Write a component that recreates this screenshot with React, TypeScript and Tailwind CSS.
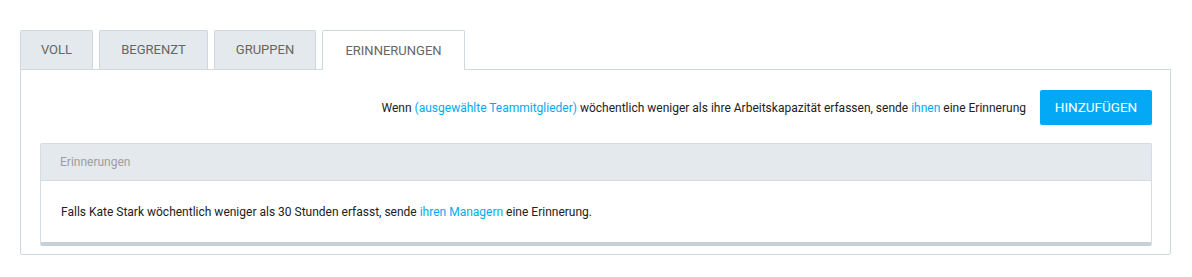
import React from "react";

export default function App() {
  const tabs = [
    { t: "VOLL", w: "w-[73px]" },
    { t: "BEGRENZT", w: "w-[109px]" },
    { t: "GRUPPEN", w: "w-[102px]" },
  ];
  return (
    <div className="w-[1192px] h-[277px] bg-white pt-[30px] pl-[20px] font-['Roboto',sans-serif]">
      <div className="flex items-end gap-[6px] h-[39px]">
        {tabs.map((x) => (
          <div
            key={x.t}
            className={`${x.w} h-[39px] flex items-center justify-center bg-[#e4e9ed] border border-b-0 border-[#cfd8dc] rounded-t-[2px] text-[13px] text-[#666]`}
          >
            {x.t}
          </div>
        ))}
        <div className="relative z-10 w-[143px] h-[40px] mb-[-1px] flex items-center justify-center bg-white border border-b-0 border-[#cfd8dc] rounded-t-[2px] text-[13px] text-[#666]">
          ERINNERUNGEN
        </div>
      </div>
      <div className="w-[1151px] border border-[#cfd8dc] rounded-b-[2px] pt-[20px] pb-[8px] pl-[19px] pr-[18px]">
        <div className="flex items-center justify-end gap-[14px]">
          <div className="text-[12px] text-[#212121]">
            Wenn <span className="text-[#03a9f4]">(ausgewählte Teammitglieder)</span> wöchentlich weniger als ihre Arbeitskapazität erfassen, sende <span className="text-[#03a9f4]">ihnen</span> eine Erinnerung
          </div>
          <button className="w-[112px] h-[35px] bg-[#03a9f4] rounded-[2px] text-white text-[13.5px]">
            HINZUFÜGEN
          </button>
        </div>
        <div className="mt-[18px] border border-[#d5dde2] border-b-[4px] border-b-[#c5d0d8] rounded-[2px]">
          <div className="h-[37px] bg-[#e4e9ed] border-b border-[#d5dde2] flex items-center pl-[19px] text-[12px] text-[#9e9e9e]">
            Erinnerungen
          </div>
          <div className="h-[61px] bg-white flex items-center pl-[20px] text-[12px] text-[#212121]">
            <span>
              Falls Kate Stark wöchentlich weniger als 30 Stunden erfasst, sende <span className="text-[#03a9f4]">ihren Managern</span> eine Erinnerung.
            </span>
          </div>
        </div>
      </div>
    </div>
  );
}
